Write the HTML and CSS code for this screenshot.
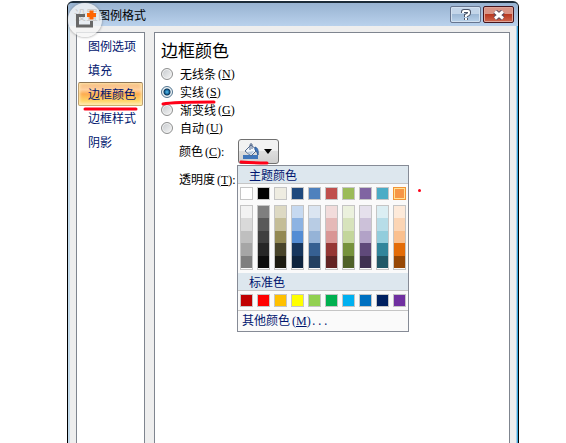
FILE: index.html
```
<!DOCTYPE html>
<html lang="zh-CN">
<head>
  <meta charset="UTF-8" />
  <meta name="viewport" content="width=device-width, initial-scale=1.0"/>
  <title>设置图例格式</title>
  <link rel="stylesheet" href="styles.css">
</head>
<body>

  <div class="dialog">
    <!-- Title bar -->
    <div class="titlebar">
      <span class="title">设置图例格式</span>
      <button class="win-btn" type="button" aria-label="帮助">
        <svg width="10" height="12" viewBox="0 0 10 12"><path d="M2 4V3q0-1 1-1h4q1 0 1 1v1q0 1-1 1.500L5 6.500V8M5 9v2" fill="none" stroke="#4b5468" stroke-width="4"/><path d="M2 4V3q0-1 1-1h4q1 0 1 1v1q0 1-1 1.500L5 6.500V8M5 9v2" fill="none" stroke="#fff" stroke-width="2"/></svg>
      </button>
      <button class="win-btn close" type="button" aria-label="关闭">
        <svg width="12" height="10" viewBox="0 0 12 10"><path d="M2 1.500l8 7M10 1.500l-8 7" stroke="#5b4a5c" stroke-width="5"/><path d="M2 1.500l8 7M10 1.500l-8 7" stroke="#fff" stroke-width="3"/></svg>
      </button>
      <div class="badge">
        <svg width="34" height="34" viewBox="0 0 34 34"><path d="M17 12.500H9.500v10.500h14v-5" fill="none" stroke="#686868" stroke-width="3"/><path d="M23.500 7.500v9M19 12h9" stroke="#ff6400" stroke-width="4"/></svg>
      </div>
    </div>

    <div class="panels">
      <!-- Categories -->
      <nav class="sidebar">
        <button type="button">图例选项</button>
        <button type="button">填充</button>
        <button type="button" class="active">边框颜色
          <svg class="mark" width="56" height="6" viewBox="0 0 56 6"><path d="M2 3H53" /></svg>
        </button>
        <button type="button">边框样式</button>
        <button type="button">阴影</button>
      </nav>

      <!-- Border color options -->
      <main class="content">
        <h1>边框颜色</h1>
        <label class="option"><input type="radio" name="line">无线条<span class="key">(<u>N</u>)</span></label>
        <label class="option"><input type="radio" name="line" checked>实线<span class="key">(<u>S</u>)</span>
          <svg class="mark" width="56" height="6" viewBox="0 0 56 6"><path d="M2 4Q12 2 53 2" /></svg>
        </label>
        <label class="option"><input type="radio" name="line">渐变线<span class="key">(<u>G</u>)</span></label>
        <label class="option"><input type="radio" name="line">自动<span class="key">(<u>U</u>)</span></label>

        <div class="field">
          <label for="color">颜色<span class="key">(<u>C</u>):</span></label>
          <div class="picker">
            <button class="color-btn" id="color" type="button">
              <svg width="18" height="17" viewBox="0 0 18 17">
                <path d="M1 12h15v4H1z" fill="#4076bb"/>
                <path d="M3 8l6-6 6 5-6 6z" fill="#f2f6fb" stroke="#53698c"/>
                <path d="M5 9l7-1-3 4z" fill="#b7c9df"/>
                <path d="M8 7V2q0-2 2-1v5" fill="none" stroke="#53698c"/>
                <path d="M13 4q4 1 3 8-1-4-3-5z" fill="#3d75bd" stroke="#315f9d"/>
              </svg>
              <span class="arrow"></span>
            </button>
            <svg class="mark" width="32" height="6" viewBox="0 0 32 6"><path d="M2 2Q14 3 28 3" /></svg>

            <div class="menu">
              <h2>主题颜色</h2>
              <div class="swatches" id="theme"></div>
              <div class="swatches shades" id="shades"></div>
              <h2>标准色</h2>
              <div class="swatches" id="standard"></div>
              <button class="more" type="button">其他颜色<span class="key">(<u>M</u>)<span class="dots">...</span></span></button>
            </div>
            <span class="dot"></span>
          </div>
        </div>
        <div class="field"><span>透明度<span class="key">(<u>T</u>):</span></span></div>
      </main>
    </div>
  </div>

  <script>
    const theme = ['#ffffff', '#000000', '#eeece1', '#1f497d', '#4f81bd', '#c0504d', '#9bbb59', '#8064a2', '#4bacc6', '#f79646'];
    const standard = ['#c00000', '#ff0000', '#ffc000', '#ffff00', '#92d050', '#00b050', '#00b0f0', '#0070c0', '#002060', '#7030a0'];
    const shades = [
      ['#f2f2f2', '#d9d9d9', '#bfbfbf', '#a6a6a6', '#7f7f7f'],
      ['#7f7f7f', '#595959', '#3f3f3f', '#262626', '#0c0c0c'],
      ['#ddd9c3', '#c4bd97', '#938953', '#494429', '#1d1b10'],
      ['#c6d9f0', '#8db3e2', '#548dd4', '#17365d', '#0f243e'],
      ['#dbe5f1', '#b8cce4', '#95b3d7', '#366092', '#244061'],
      ['#f2dcdb', '#e5b9b7', '#d99694', '#953734', '#632423'],
      ['#ebf1dd', '#d7e3bc', '#c3d69b', '#76923c', '#4f6128'],
      ['#e5e0ec', '#ccc1d9', '#b2a2c7', '#5f497a', '#3f3151'],
      ['#dbeef3', '#b7dde8', '#92cddc', '#31859b', '#205867'],
      ['#fdeada', '#fbd5b5', '#fac08f', '#e36c09', '#974806']
    ];

    function swatch(color) {
      return `<button type="button" aria-label="${color}" style="background-color: ${color}"></button>`;
    }

    document.getElementById('theme').innerHTML = theme.map(swatch).join('');
    document.getElementById('standard').innerHTML = standard.map(swatch).join('');
    document.getElementById('shades').innerHTML = shades.map(col => `<div class="column">${col.map(swatch).join('')}</div>`).join('');
    document.getElementById('theme').lastChild.className = 'selected';
  </script>

</body>
</html>
```
FILE: styles.css
```
* {
  box-sizing: border-box;
}
body {
  margin: 0;
  background-color: #fff;
  font-family: "Noto Sans CJK SC", sans-serif;
  font-size: 12px;
  line-height: 18px;
  color: #000;
}
button {
  font: inherit;
  color: inherit;
  padding: 0;
}
.dialog {
  display: flex;
  flex-direction: column;
  min-height: calc(100vh - 1px);
  margin: 1px 47px 0 67px;
  border: 1px solid #000;
  border-top: 2px solid #1c2b38;
  border-bottom: none;
  border-radius: 6px 6px 0 0;
  background-color: #eee;
  box-shadow: inset 2px 0 #c4dcec, inset -1px 0 #38a8dc, inset -2px 0 #a8cce8;
}
.titlebar {
  position: relative;
  display: flex;
  align-items: center;
  gap: 2px;
  height: 23px;
  padding: 0 4px 0 6px;
  border-radius: 4px 4px 0 0;
  background: linear-gradient(#98b3d1, #b9d1ec);
}
.title {
  flex: 1;
}
.win-btn {
  display: flex;
  align-items: center;
  justify-content: center;
  width: 31px;
  height: 17px;
  border: 1px solid #66758f;
  border-radius: 2px;
  background: linear-gradient(#c3d5e9 45%, #9db8d5 50%, #b9d2ea);
  box-shadow: inset 0 0 0 1px #d3e1f0;
}
.win-btn.close {
  border-color: #45141c;
  background: linear-gradient(#d99486 45%, #b83820 50%, #cf6850);
  box-shadow: inset 0 0 0 1px #dfa598;
}
.badge {
  position: absolute;
  left: 0;
  top: 0;
  width: 34px;
  height: 34px;
  border-radius: 50%;
  background-color: rgba(245, 245, 245, 0.8);
  box-shadow: 0 0 2px 1px rgba(120, 120, 120, 0.4);
}
.badge svg {
  display: block;
}
.panels {
  flex: 1;
  display: flex;
  gap: 9px;
  padding: 6px 8px 0;
}
.sidebar, .content {
  border: 1px solid #7f858f;
  border-bottom: none;
  background-color: #fff;
}
.sidebar {
  display: flex;
  flex-direction: column;
  width: 69px;
  padding: 1px;
  color: #00156e;
}
.sidebar button {
  position: relative;
  height: 24px;
  padding: 0 0 0 9px;
  border: 1px solid transparent;
  border-radius: 2px;
  background: none;
  text-align: left;
}
.sidebar .active {
  border-color: #8f7654 #c0a070 #c9ae6c;
  background: linear-gradient(#f3b678, #ffd0a0 30%, #fdac50 50%, #ffd467 80%, #ffe9a0);
  box-shadow: inset 0 0 3px 1px #ffe9b0;
}
.mark {
  position: absolute;
  fill: none;
  stroke: #ff0018;
  stroke-width: 3;
  stroke-linecap: round;
}
.sidebar .mark {
  left: 4px;
  top: 23px;
  z-index: 1;
}
.content {
  flex: 1;
  padding: 5px 6px;
}
h1 {
  margin: 0 0 3px;
  font-size: 17px;
  font-weight: normal;
  line-height: 24px;
}
.option {
  position: relative;
  display: flex;
  align-items: center;
  width: 80px;
  height: 18px;
}
.option input {
  appearance: none;
  width: 12px;
  height: 12px;
  margin: 0 7px 0 0;
  border: 1px solid #8e8f8f;
  border-radius: 50%;
  background: linear-gradient(135deg, #c5c9cd, #f6f6f6);
  box-shadow: inset 0 0 0 1px #f4f4f4;
}
.option input:checked {
  border-color: #51748f;
  background: radial-gradient(circle, #5cc3ee, #1a6ea5 2px, #0b3557 3px, #d5e4ee 4px);
}
.option .mark {
  left: 0;
  top: 17px;
  z-index: 1;
}
.key {
  margin-left: 2px;
  font-family: "Liberation Serif", serif;
}
.dots {
  font-family: "Liberation Mono", monospace;
  font-size: 10px;
}
.field {
  display: grid;
  grid-template-columns: 59px 1fr;
  align-items: center;
  min-height: 28px;
  padding-left: 18px;
}
.picker {
  position: relative;
  width: 41px;
}
.color-btn {
  display: flex;
  align-items: center;
  justify-content: space-between;
  width: 41px;
  height: 25px;
  padding: 0 6px 0 3px;
  border: 1px solid #707070;
  border-radius: 3px;
  background: linear-gradient(#f2f2f2 45%, #dddddd 50%, #cfcfcf);
}
.arrow {
  border: 4px solid transparent;
  border-top: 5px solid #000;
  border-bottom: none;
}
.picker .mark {
  left: 1px;
  top: 21px;
  z-index: 2;
}
.menu {
  position: absolute;
  left: -1px;
  top: 26px;
  z-index: 1;
  width: 172px;
  border: 1px solid #868b96;
  background-color: #fafafa;
  color: #00156e;
}
.menu h2 {
  height: 18px;
  margin: 0;
  padding-left: 11px;
  border-bottom: 1px solid #c5c5c5;
  background-color: #dde7ee;
  font-size: 12px;
  font-weight: normal;
}
.swatches {
  display: flex;
  justify-content: space-between;
  padding: 3px 2px;
}
.swatches button {
  width: 13px;
  height: 13px;
  border: 1px solid #c5c5c5;
}
.swatches .selected {
  border-color: #f29436;
  box-shadow: inset 0 0 0 1px #ffe294;
}
.shades {
  padding-top: 2px;
}
.column {
  display: flex;
  flex-direction: column;
  width: 13px;
  height: 65px;
  border: 1px solid #c5c5c5;
}
.swatches .column button {
  flex: 1;
  width: 11px;
  border: none;
}
.more {
  display: block;
  width: 100%;
  height: 21px;
  padding: 0 0 0 4px;
  border: none;
  border-top: 1px solid #c5c5c5;
  background: none;
  text-align: left;
}
.dot {
  position: absolute;
  left: 180px;
  top: 50px;
  width: 3px;
  height: 3px;
  border-radius: 50%;
  background-color: #ff0018;
}
```
